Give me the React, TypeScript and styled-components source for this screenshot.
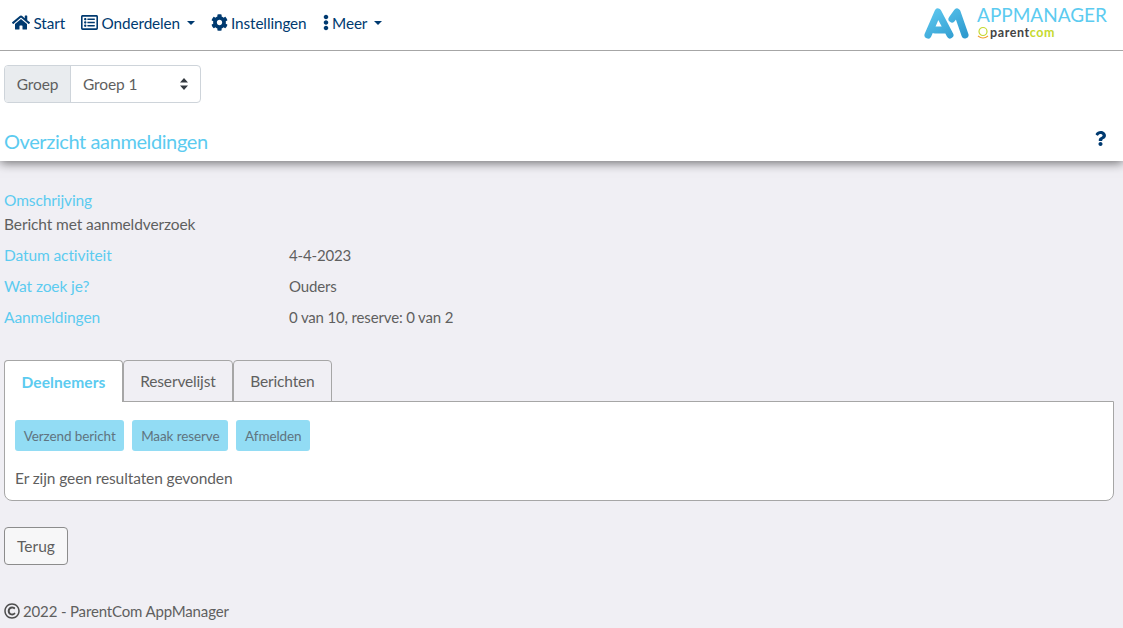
import styled, { createGlobalStyle } from "styled-components";
import { FaHome, FaRegListAlt, FaCog, FaEllipsisV, FaQuestion, FaRegCopyright } from "react-icons/fa";

const GlobalStyle = createGlobalStyle`
  html, body {
    margin: 0;
    padding: 0;
    background: #f0eff4;
    color: #5f5f5f;
    font-family: "Lato", "Open Sans", sans-serif;
    font-size: 15.5px;
    letter-spacing: -0.1px;
    line-height: 24px;
  }
  * { box-sizing: border-box; }
`;

const Page = styled.div`
  width: 1123px;
  height: 628px;
  overflow: hidden;
  display: flex;
  flex-direction: column;
`;

const TopBar = styled.header`
  height: 51px;
  background: #fff;
  border-bottom: 1px solid #a6a6a6;
  display: flex;
  align-items: center;
  justify-content: space-between;
  padding: 0 16px 5px 12px;
`;

const Nav = styled.nav`
  display: flex;
  align-items: center;
  gap: 16px;
`;

const NavItem = styled.a`
  display: flex;
  align-items: center;
  gap: 3.5px;
  color: #003a70;
  font-size: 15.3px;
  svg { font-size: 17px; }
`;

const HomeIcon = styled(FaHome)`
  width: 18px;
`;

const DotsIcon = styled(FaEllipsisV)`
  width: 6px;
`;

const Caret = styled.span`
  width: 0;
  height: 0;
  margin-left: 3px;
  border-top: 4px solid #003a70;
  border-left: 4px solid transparent;
  border-right: 4px solid transparent;
`;

const Logo = styled.div`
  display: flex;
  align-items: center;
  gap: 8px;
`;

const LogoText = styled.div`
  display: flex;
  flex-direction: column;
  gap: 2px;
`;

const LogoTitle = styled.span`
  color: #5ccbf0;
  font-size: 19px;
  line-height: 18px;
  letter-spacing: 0;
`;

const LogoSub = styled.span`
  display: flex;
  align-items: center;
  gap: 1px;
  font-size: 12.5px;
  font-weight: 700;
  line-height: 13px;
  letter-spacing: 0.6px;
  color: #444;
`;

const LogoLime = styled.span`
  color: #c5d930;
`;

const WhitePanel = styled.section`
  background: #fff;
  padding: 14px 4px 0;
  height: 110px;
  box-shadow: 0 2px 10px rgba(0, 0, 0, 0.55);
  clip-path: inset(0 0 -24px 0);
  position: relative;
`;

const InputGroup = styled.div`
  display: inline-flex;
  height: 38px;
  width: 197px;
  border: 1px solid #ced4da;
  border-radius: 4px;
  overflow: hidden;
`;

const GroupLabel = styled.div`
  width: 66px;
  background: #e9ecef;
  border-right: 1px solid #ced4da;
  display: flex;
  align-items: center;
  justify-content: center;
`;

const GroupSelect = styled.div`
  flex: 1;
  display: flex;
  align-items: center;
  justify-content: space-between;
  padding: 0 12px;
`;

const TitleRow = styled.div`
  display: flex;
  align-items: center;
  justify-content: space-between;
  margin-top: 25px;
  padding-right: 11px;
`;

const Title = styled.h1`
  margin: 0;
  font-size: 20px;
  font-weight: 400;
  line-height: 26px;
  letter-spacing: -0.4px;
  color: #5ccbf0;
`;

const HelpIcon = styled(FaQuestion)`
  color: #003a70;
  font-size: 15px;
  margin-bottom: 6px;
`;

const Main = styled.main`
  flex: 1;
  padding: 27px 9px 0 4px;
  display: flex;
  flex-direction: column;
`;

const DetailLabel = styled.div`
  color: #5ccbf0;
`;

const DetailValue = styled.div`
  font-size: 15px;
  letter-spacing: -0.15px;
`;

const DetailRow = styled.div`
  display: grid;
  grid-template-columns: 285px 1fr;
  margin-top: 7px;
`;

const Tabs = styled.div`
  display: flex;
  margin-top: 31px;
`;

const Tab = styled.div<{ $active?: boolean }>`
  height: 42px;
  padding: 0 ${(p) => (p.$active ? "16.5px" : "16.25px")};
  display: flex;
  align-items: center;
  border: 1px solid #a6a6a6;
  border-bottom: ${(p) => (p.$active ? "none" : "1px solid #a6a6a6")};
  border-radius: 4px 4px 0 0;
  background: ${(p) => (p.$active ? "#fff" : "transparent")};
  color: ${(p) => (p.$active ? "#5ccbf0" : "#5f5f5f")};
  font-weight: ${(p) => (p.$active ? 700 : 400)};
  letter-spacing: ${(p) => (p.$active ? "0.1px" : "-0.15px")};
  position: relative;
  z-index: ${(p) => (p.$active ? 1 : 0)};
`;

const TabPanel = styled.div`
  margin-top: -1px;
  height: 100px;
  background: #fff;
  border: 1px solid #a6a6a6;
  border-radius: 0 0 8px 8px;
  padding: 18px 10px 0;
`;

const ActionRow = styled.div`
  display: flex;
  gap: 8px;
`;

const ActionButton = styled.button`
  height: 31px;
  padding: 0 8.75px;
  border: none;
  border-radius: 3px;
  background: #92dcf4;
  color: #5f7480;
  font-family: inherit;
  font-size: 13.5px;
  letter-spacing: -0.1px;
`;

const EmptyText = styled.p`
  margin: 15px 0 0;
`;

const BackButton = styled.button`
  align-self: flex-start;
  margin-top: 26px;
  height: 38px;
  width: 64px;
  border: 1px solid #8c8c8c;
  border-radius: 4px;
  background: #f7f7f8;
  color: #5f5f5f;
  font-family: inherit;
  font-size: 15.5px;
`;

const Footer = styled.footer`
  margin-top: 34px;
  display: flex;
  align-items: center;
  gap: 3px;
  font-size: 15px;
  letter-spacing: -0.15px;
  svg { font-size: 16px; color: #4d4d4d; }
`;

const details = [
  ["Datum activiteit", "4-4-2023"],
  ["Wat zoek je?", "Ouders"],
  ["Aanmeldingen", "0 van 10, reserve: 0 van 2"],
];

function LogoMark() {
  return (
    <svg width="45" height="34" viewBox="0 0 45 34">
      <defs>
        <linearGradient id="mark" x1="0" y1="0" x2="1" y2="1">
          <stop offset="0" stopColor="#5cc6ee" />
          <stop offset="1" stopColor="#2f9bcf" />
        </linearGradient>
      </defs>
      <path
        d="M4 29 L14 6 L26 29 M11 24 H20 M28 13 L33 6 L41 29"
        fill="none"
        stroke="url(#mark)"
        strokeWidth="7"
        strokeLinecap="round"
        strokeLinejoin="round"
      />
    </svg>
  );
}

function ParentMark() {
  return (
    <svg width="12" height="13" viewBox="0 0 12 13">
      <circle cx="6" cy="5.5" r="4" fill="none" stroke="#c5d930" strokeWidth="1.2" />
      <path d="M1 10 Q6 14 11 10" fill="none" stroke="#f0a030" strokeWidth="1.2" />
    </svg>
  );
}

export default function App() {
  return (
    <Page>
      <GlobalStyle />
      <TopBar>
        <Nav>
          <NavItem><HomeIcon />Start</NavItem>
          <NavItem><FaRegListAlt />Onderdelen<Caret /></NavItem>
          <NavItem><FaCog />Instellingen</NavItem>
          <NavItem><DotsIcon />Meer<Caret /></NavItem>
        </Nav>
        <Logo>
          <LogoMark />
          <LogoText>
            <LogoTitle>APPMANAGER</LogoTitle>
            <LogoSub>
              <ParentMark />
              <span>parent<LogoLime>com</LogoLime></span>
            </LogoSub>
          </LogoText>
        </Logo>
      </TopBar>
      <WhitePanel>
        <InputGroup>
          <GroupLabel>Groep</GroupLabel>
          <GroupSelect>
            Groep 1
            <svg width="8" height="12" viewBox="0 0 8 12">
              <path d="M4 0 L8 4.6 H0 Z M4 12 L0 7.4 H8 Z" fill="#343a40" />
            </svg>
          </GroupSelect>
        </InputGroup>
        <TitleRow>
          <Title>Overzicht aanmeldingen</Title>
          <HelpIcon />
        </TitleRow>
      </WhitePanel>
      <Main>
        <DetailLabel>Omschrijving</DetailLabel>
        <div>Bericht met aanmeldverzoek</div>
        {details.map(([label, value]) => (
          <DetailRow key={label}>
            <DetailLabel>{label}</DetailLabel>
            <DetailValue>{value}</DetailValue>
          </DetailRow>
        ))}
        <Tabs>
          <Tab $active>Deelnemers</Tab>
          <Tab>Reservelijst</Tab>
          <Tab>Berichten</Tab>
        </Tabs>
        <TabPanel>
          <ActionRow>
            <ActionButton>Verzend bericht</ActionButton>
            <ActionButton>Maak reserve</ActionButton>
            <ActionButton>Afmelden</ActionButton>
          </ActionRow>
          <EmptyText>Er zijn geen resultaten gevonden</EmptyText>
        </TabPanel>
        <BackButton>Terug</BackButton>
        <Footer><FaRegCopyright />2022 - ParentCom AppManager</Footer>
      </Main>
    </Page>
  );
}
